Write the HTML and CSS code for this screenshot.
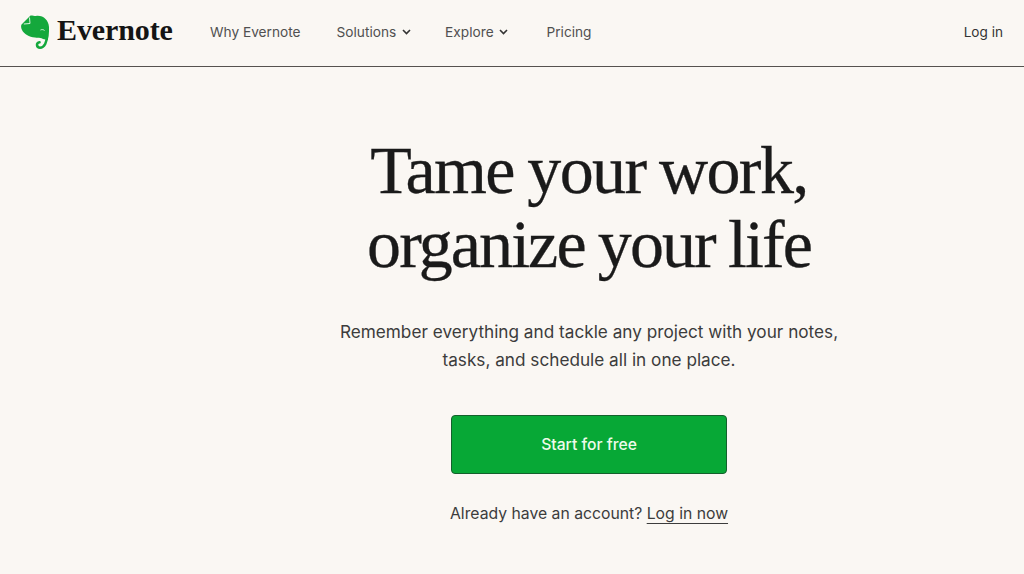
FILE: index.html
```html
<!DOCTYPE html>
<html lang="en">
<head>
    <meta charset="UTF-8">
    <meta name="viewport" content="width=device-width, initial-scale=1.0">
    <title>Evernote</title>
    <link rel="stylesheet" href="styles.css">
</head>
<body>
    <header class="topbar">
        <a class="brand" href="#">
            <svg class="brand-icon" viewBox="0 0 28 34" width="28" height="34">
                <path fill="#14a83c" d="M9.500.5C12 .5 13 1 15 1C22 0 27.500 5 28 12C28.300 17 27.500 22 26.800 25L22 24C19 22 17 23 14 22.500C8 22 3 19 1 15C0 13-.2 11 .5 9.500Z"/>
                <path fill="none" stroke="#14a83c" stroke-width="2.600" stroke-linecap="round" d="M26 20C26 27 23.500 32.700 19 32.700C15.500 32.700 14.800 27.500 18.500 27.300"/>
                <path fill="none" stroke="#d9f2dd" stroke-width="1" d="M8.500 2.500L9 8.500L2.800 9"/>
                <path fill="none" stroke="#d9f2dd" stroke-width="1" d="M19.500 15C20.800 14.300 22.500 14.500 23.500 15.500"/>
            </svg>
            <span class="brand-name">Evernote</span>
        </a>
        <nav class="nav">
            <a href="#">Why Evernote</a>
            <a class="nav-solutions" href="#">Solutions
                <svg class="chev" viewBox="0 0 9 6" width="9" height="6"><path d="M1 1l3.500 3.500L8 1" fill="none" stroke="#333" stroke-width="1.600"/></svg>
            </a>
            <a class="nav-explore" href="#">Explore
                <svg class="chev" viewBox="0 0 9 6" width="9" height="6"><path d="M1 1l3.500 3.500L8 1" fill="none" stroke="#333" stroke-width="1.600"/></svg>
            </a>
            <a href="#">Pricing</a>
        </nav>
        <a class="login" href="#">Log in</a>
    </header>

    <main class="hero">
        <h1>Tame your work,<br><span class="line-two">organize your life</span></h1>
        <p class="lead">Remember everything and tackle any project with your notes,<br>tasks, and schedule all in one place.</p>
        <a class="start-btn" href="#">Start for free</a>
        <p class="account">Already have an account? <a href="#">Log in now</a></p>
    </main>
</body>
</html>
```

FILE: styles.css
```css
* {
    margin: 0;
    padding: 0;
    box-sizing: border-box;
}

body {
    font-family: Inter, 'Noto Sans', sans-serif;
    background: #faf7f3;
    color: #333;
    min-height: 100vh;
    overflow: hidden;
}

a {
    color: inherit;
    text-decoration: none;
}

.topbar {
    display: flex;
    align-items: center;
    height: 67px;
    padding: 0 21px 3px 21px;
    border-bottom: 1px solid #55524f;
}

.brand {
    display: flex;
    align-items: center;
    gap: 8px;
    width: 189px;
}

.brand-name {
    margin-bottom: 3px;
    font-family: 'Liberation Serif', serif;
    font-size: 30px;
    font-weight: 700;
    letter-spacing: -.1px;
    color: #141414;
}

.nav {
    display: flex;
    align-items: center;
    gap: 36px;
    font-size: 13.700px;
    color: #505050;
}

.nav-solutions {
    margin-right: -2px;
}

.nav-explore {
    margin-right: 2px;
}

.chev {
    margin-left: 2px;
    vertical-align: 2px;
}

.login {
    margin-left: auto;
    font-size: 13.600px;
    color: #333;
}

.hero {
    display: flex;
    flex-direction: column;
    align-items: center;
    padding: 66px 0 0 154px;
    text-align: center;
}

h1 {
    font-family: 'Liberation Serif', serif;
    font-size: 68px;
    font-weight: 400;
    line-height: 74px;
    letter-spacing: -1.600px;
    word-spacing: -2px;
    color: #1a1a1a;
    -webkit-text-stroke: .3px #1a1a1a;
}

.line-two {
    letter-spacing: -1.900px;
}

.lead {
    margin-top: 37px;
    font-size: 17.200px;
    line-height: 28px;
    color: #3c3c3c;
}

.start-btn {
    display: flex;
    align-items: center;
    justify-content: center;
    width: 276px;
    height: 59px;
    margin-top: 41px;
    background: #07a836;
    border: 1px solid #14602c;
    border-radius: 4px;
    color: #eefbea;
    font-size: 15.700px;
    font-weight: 500;
}

.account {
    margin-top: 30px;
    font-size: 15.750px;
    color: #3c3c3c;
}

.account a {
    text-decoration: underline;
    text-decoration-thickness: 1px;
    text-underline-offset: 4px;
    text-decoration-skip-ink: none;
}
```
